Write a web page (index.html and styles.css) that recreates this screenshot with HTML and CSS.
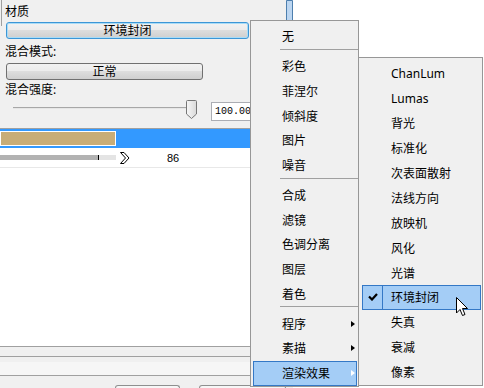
FILE: index.html
```html
<!DOCTYPE html>
<html lang="zh-CN">
  <head>
    <meta charset="UTF-8" />
    <title>材质混合</title>
    <link rel="stylesheet" href="styles.css">
  </head>
  <body>
    <div class="screen">
      <div class="editor">
        <div class="props">
          <div class="label">材质</div>
          <button class="btn btn-focus">环境封闭</button>
          <div class="label label-gap">混合模式:</div>
          <button class="btn btn-mode">正常</button>
          <div class="label">混合强度:</div>
          <div class="slider-row">
            <svg class="slider" width="200" height="21" viewBox="0 0 200 21">
              <line x1="13" y1="7.5" x2="187" y2="7.5" stroke="#a7a7a7" />
              <line x1="13" y1="8.5" x2="187" y2="8.5" stroke="#e6e6e6" />
              <defs>
                <linearGradient id="thumbFill" x1="0" y1="0" x2="1" y2="0">
                  <stop offset="0" stop-color="#f7f7f7" />
                  <stop offset="1" stop-color="#d9d9d9" />
                </linearGradient>
              </defs>
              <path d="M187.5 0.5 h8 a1 1 0 0 1 1 1 v12.5 l-5 4.5 l-5 -4.5 v-12.5 a1 1 0 0 1 1 -1 z" fill="url(#thumbFill)" stroke="#767676" />
            </svg>
            <div class="num">100.00</div>
          </div>
        </div>
        <div class="layers">
          <div class="layer selected"><div class="swatch"></div></div>
          <div class="layer">
            <div class="bar"><div class="bar-fill" style="width: 99px"></div></div>
            <svg class="chevron" width="10" height="12" viewBox="0 0 10 12">
              <path d="M0.5 0.5 H4 L9 6 L4 11.5 H0.5 L5.5 6 Z" fill="#fff" stroke="#000" stroke-width="1" />
            </svg>
            <span class="value">86</span>
          </div>
        </div>
        <div class="footer">
          <div class="band band-top"></div>
          <div class="band band-mid"></div>
          <div class="band band-low">
            <span class="tab tab-a"></span>
            <span class="tab tab-b"></span>
          </div>
        </div>
      </div>
      <div class="vscroll"><div class="vscroll-thumb"></div></div>
      <div class="canvas"></div>

      <div class="menu menu-main">
        <div class="item"><span class="check"></span><span class="text">无</span></div>
        <div class="sep"></div>
        <div class="item"><span class="check"></span><span class="text">彩色</span></div>
        <div class="item"><span class="check"></span><span class="text">菲涅尔</span></div>
        <div class="item"><span class="check"></span><span class="text">倾斜度</span></div>
        <div class="item"><span class="check"></span><span class="text">图片</span></div>
        <div class="item"><span class="check"></span><span class="text">噪音</span></div>
        <div class="sep"></div>
        <div class="item"><span class="check"></span><span class="text">合成</span></div>
        <div class="item"><span class="check"></span><span class="text">滤镜</span></div>
        <div class="item"><span class="check"></span><span class="text">色调分离</span></div>
        <div class="item"><span class="check"></span><span class="text">图层</span></div>
        <div class="item"><span class="check"></span><span class="text">着色</span></div>
        <div class="sep"></div>
        <div class="item"><span class="check"></span><span class="text">程序</span><span class="arrow"></span></div>
        <div class="item"><span class="check"></span><span class="text">素描</span><span class="arrow"></span></div>
        <div class="item active"><span class="check"></span><span class="text">渲染效果</span><span class="arrow"></span></div>
      </div>

      <div class="menu menu-sub">
        <div class="item"><span class="check"></span><span class="text">ChanLum</span></div>
        <div class="item"><span class="check"></span><span class="text">Lumas</span></div>
        <div class="item"><span class="check"></span><span class="text">背光</span></div>
        <div class="item"><span class="check"></span><span class="text">标准化</span></div>
        <div class="item"><span class="check"></span><span class="text">次表面散射</span></div>
        <div class="item"><span class="check"></span><span class="text">法线方向</span></div>
        <div class="item"><span class="check"></span><span class="text">放映机</span></div>
        <div class="item"><span class="check"></span><span class="text">风化</span></div>
        <div class="item"><span class="check"></span><span class="text">光谱</span></div>
        <div class="item active">
          <span class="check">
            <svg width="10" height="8" viewBox="0 0 10 8"><path d="M1 3.5 L4 6.5 L9 1" fill="none" stroke="#000" stroke-width="2.2" /></svg>
          </span>
          <span class="text">环境封闭</span>
        </div>
        <div class="item"><span class="check"></span><span class="text">失真</span></div>
        <div class="item"><span class="check"></span><span class="text">衰减</span></div>
        <div class="item"><span class="check"></span><span class="text">像素</span></div>
      </div>

      <svg class="cursor" width="13" height="20" viewBox="0 0 13 20">
        <path d="M0.5 0.5 V16 L4 12.5 L6.5 18.5 L9 17.5 L6.5 11.5 H11.5 Z" fill="#fff" stroke="#000" stroke-width="1" stroke-linejoin="round" />
      </svg>
    </div>
  </body>
</html>
```

FILE: styles.css
```css
body {
  margin: 0;
  font-family: "Noto Sans", "Noto Sans CJK SC", sans-serif;
  font-size: 12px;
  color: #000;
}
.screen {
  position: relative;
  display: flex;
  width: 484px;
  height: 388px;
  overflow: hidden;
  background-color: #f0f0f0;
}
.editor {
  width: 286px;
  flex-shrink: 0;
  display: flex;
  flex-direction: column;
}

/* properties */
.props {
  position: relative;
  height: 129px;
  box-sizing: border-box;
  padding-top: 5px;
  border-bottom: 1px solid #a0a0a0;
}
/* edge of the group box above, cut off by the window */
.props::before {
  content: "";
  position: absolute;
  left: 1px;
  top: 0;
  height: 26px;
  border-left: 1px solid #a0a0a0;
}
.label {
  height: 14px;
  line-height: 14px;
  padding-left: 5px;
  margin-top: 3px;
}
.props .label:first-child {
  margin-top: 0;
}
.label-gap {
  margin-top: 6px;
}
.btn {
  display: block;
  margin: 3px 0 0 6px;
  padding: 0;
  width: 243px;
  height: 17px;
  border: 1px solid #707070;
  border-radius: 3px;
  background: linear-gradient(#f2f2f2, #ebebeb 50%, #dddddd 50%, #cfcfcf);
  font: inherit;
  line-height: 15px;
  color: #000;
}
.btn-focus {
  border-color: #3c96d6;
  box-shadow: inset 0 0 0 1px #a9dcf7;
}
.btn-mode {
  width: 197px;
  margin-top: 4px;
}
.slider-row {
  display: flex;
  margin-top: 3px;
  height: 21px;
}
.slider {
  flex-shrink: 0;
}
.num {
  flex-shrink: 0;
  margin: 2px 0 0 11px;
  width: 80px;
  height: 19px;
  box-sizing: border-box;
  border: 1px solid #abadb3;
  background-color: #fff;
  padding-left: 3px;
  font-family: "Liberation Mono", monospace;
  font-size: 10px;
  line-height: 17px;
}

/* layer list */
.layers {
  flex: 1;
  background-color: #fff;
}
.layer {
  display: flex;
  align-items: center;
  height: 20px;
  box-sizing: border-box;
  border-bottom: 1px solid #e8e8e8;
}
.layer.selected {
  height: 19px;
  border-bottom: 0;
  background-color: #3399ff;
}
.swatch {
  width: 114px;
  height: 13px;
  border: 1px solid #fff;
  background-color: #c8ad78;
}
.bar {
  width: 116px;
  height: 5px;
  background-color: #e4e4e4;
}
.bar-fill {
  height: 5px;
  box-sizing: border-box;
  border-right: 1px solid #000;
  background-color: #b2b2b2;
}
.chevron {
  margin-left: 4px;
}
.value {
  margin-left: 37px;
  font-family: "Liberation Sans", sans-serif;
  font-size: 11px;
}

/* bottom bars */
.footer {
  height: 42px;
}
.band {
  border-top: 1px solid #a0a0a0;
}
.band-top {
  height: 9px;
}
.band-mid {
  height: 18px;
  background: linear-gradient(#f0f0f0 5px, #f6f6f6 5px);
}
.band-low {
  height: 12px;
  display: flex;
  align-items: flex-end;
}
.tab {
  height: 2px;
  border: 1px solid #8e8f8f;
  border-bottom: 0;
  border-radius: 3px 3px 0 0;
  background-color: #f6f6f6;
}
.tab-a {
  margin-left: 115px;
  width: 66px;
}
.tab-b {
  margin-left: 19px;
  width: 90px;
}

.vscroll {
  width: 7px;
  flex-shrink: 0;
}
.vscroll-thumb {
  height: 30px;
  box-sizing: border-box;
  border: 1px solid #4d7fae;
  border-radius: 0 0 2px 2px;
  background-color: #bcd6f1;
}
.canvas {
  flex: 1;
  background-color: #fff;
}

/* popup menus */
.menu {
  position: absolute;
  box-sizing: border-box;
  border: 1px solid #979797;
  background-color: #f0f0f0;
  padding-top: 3px;
}
.menu-main {
  left: 250px;
  top: 20px;
  width: 109px;
}
.menu-sub {
  left: 358px;
  top: 57px;
  width: 125px;
}
.item {
  display: flex;
  align-items: center;
  height: 24.75px;
  box-sizing: border-box;
  margin: 0 1px 0 2px;
  border: 1px solid transparent;
  white-space: nowrap;
}
.menu-sub .item {
  height: 24.9px;
  margin-left: 3px;
}
.check {
  width: 20px;
  height: 100%;
  box-sizing: border-box;
  display: flex;
  align-items: center;
  justify-content: center;
}
.text {
  margin-left: 8px;
}
.item.active {
  background-color: #a4cdf6;
  border-color: #3478c6;
}
.menu-sub .item.active .check {
  border-right: 1px solid #3478c6;
}
.arrow {
  margin-left: auto;
  margin-right: 1px;
  border-left: 4px solid #000;
  border-top: 3.5px solid transparent;
  border-bottom: 3.5px solid transparent;
}
.item.active .arrow {
  border-left-color: #fff;
}
.sep {
  margin: 0 0 4px 29px;
  border-top: 1px solid #a0a0a0;
}
.cursor {
  position: absolute;
  left: 456px;
  top: 297px;
}
```
